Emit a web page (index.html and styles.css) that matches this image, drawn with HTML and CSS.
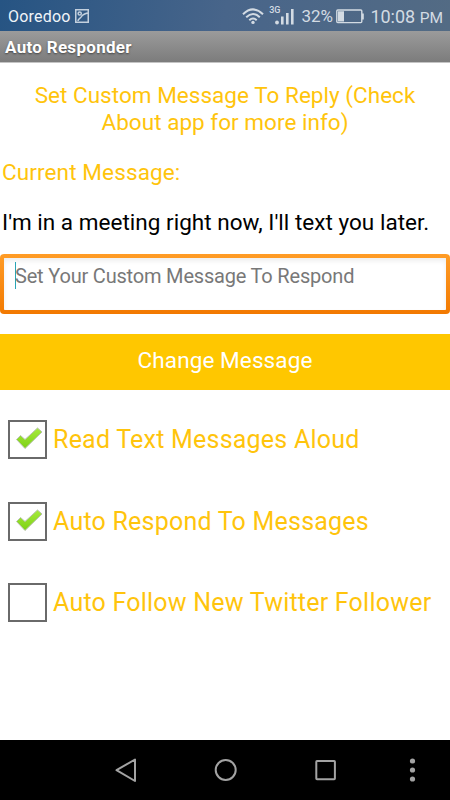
FILE: index.html
```html
<!DOCTYPE html>
<html lang="en">
<head>
<meta charset="utf-8">
<title>Auto Responder</title>
<link rel="stylesheet" href="styles.css">
</head>
<body>
<div class="screen">
  <header class="status">
    <span class="carrier">Ooredoo</span>
    <svg class="picture" width="14" height="14" viewBox="0 0 14 14" fill="none" stroke="#c3d0de" stroke-width="1.5"><path d="M.75.75h12.500v12.500H.75zM3 12c0-2.500 2.500-2.500 3.500-4.500S9 5 12.500 4"/><circle cx="4.700" cy="4.500" r="1.600"/></svg>
    <div class="indicators">
      <svg class="wifi" width="22" height="17" viewBox="0 0 22 17" fill="none" stroke="#d3dbe3" stroke-width="2"><path d="M1 6.200Q11-3.400 21 6.200M4.200 9.200Q11 2.700 17.800 9.200M7.300 12.200Q11 8.700 14.700 12.200"/><circle cx="11" cy="14.400" r="1.700" fill="#d3dbe3" stroke="none"/></svg>
      <span class="network">3G</span>
      <svg class="signal" width="19" height="17" viewBox="0 0 19 17" fill="#d3dbe3"><circle cx="2" cy="14.500" r="1.900"/><path d="M6 8.500h2.600v8H6zM11 5h2.600v11.500H11zM16 1h2.600v15.500H16z"/></svg>
      <span class="percent">32%</span>
      <svg class="battery" width="28" height="15" viewBox="0 0 28 15"><rect x=".8" y="1" width="25" height="12.600" rx="1" fill="none" stroke="#d3dbe3" stroke-width="1.400"/><path d="M2 2.200h6v10.200H2zM26 4.500h1.800v6H26z" fill="#d3dbe3"/></svg>
      <span class="clock">10:08 <small>PM</small></span>
    </div>
  </header>
  <h1 class="title">Auto Responder</h1>
  <main>
    <p class="heading">Set Custom Message To Reply (Check<br>About app for more info)</p>
    <p class="current">Current Message:</p>
    <p class="message">I'm in a meeting right now, I'll text you later.</p>
    <div class="field"><div class="field-inner"><span class="caret"></span><span class="hint">Set Your Custom Message To Respond</span></div></div>
    <div class="button">Change Message</div>
    <div class="options">
      <div class="option"><span class="box"><svg width="28" height="24" viewBox="0 0 28 24"><use href="#tick"/></svg></span><span>Read Text Messages Aloud</span></div>
      <div class="option"><span class="box"><svg width="28" height="24" viewBox="0 0 28 24"><use href="#tick"/></svg></span><span>Auto Respond To Messages</span></div>
      <div class="option"><span class="box"></span><span>Auto Follow New Twitter Follower</span></div>
    </div>
  </main>
  <nav class="nav">
    <svg width="450" height="60" viewBox="0 0 450 60" fill="none" stroke="#a3a3a3" stroke-width="2"><path d="M135 19.500v21.500L116.500 30.200z" stroke-linejoin="round"/><circle cx="225.700" cy="30" r="10"/><rect x="316.300" y="21" width="18.600" height="18.200" rx=".7"/><g fill="#a3a3a3" stroke="none"><circle cx="412.500" cy="21" r="2.600"/><circle cx="412.500" cy="30" r="2.600"/><circle cx="412.500" cy="39" r="2.600"/></g></svg>
  </nav>
</div>
<svg class="defs" width="0" height="0"><defs><linearGradient id="leaf" x1="0" y1="0" x2="0" y2="1"><stop offset="0" stop-color="#a6ea3c"/><stop offset="1" stop-color="#7dd114"/></linearGradient><path id="tick" d="M1.500 12.500 5.500 8.500 10 12.500 22.500 1 27 5 10 21.500z" fill="url(#leaf)" stroke="#b9c2b0" stroke-width="1" stroke-linejoin="round"/></defs></svg>
</body>
</html>
```
FILE: styles.css
```css
* { box-sizing: border-box; }
body { margin: 0; background: #fff; font-family: Roboto, sans-serif; }
p, h1 { margin: 0; font-weight: 400; }
svg { display: block; flex: none; }
.defs { position: absolute; }
.screen { width: 450px; height: 800px; display: flex; flex-direction: column; overflow: hidden; white-space: nowrap; }
.status { height: 31px; flex: none; display: flex; align-items: center; padding: 1px 8px 0; background: linear-gradient(100deg, #265483, #48658a 50%, #536b84); color: #d3dbe3; }
.carrier { font-size: 16px; color: #f0f4f8; width: 63px; letter-spacing: .2px; }
.picture { margin-left: 4px; }
.indicators { display: flex; align-items: center; margin-left: auto; }
.network { font-size: 9px; font-weight: 500; line-height: 8px; margin: 0 -7px 13px 5px; }
.signal { margin-left: 2px; }
.percent { font-size: 17px; margin-left: 7px; width: 34px; }
.battery { margin-left: 1px; }
.clock { font-size: 18px; margin: 0 -1px 0 6px; }
.clock small { font-size: 15.500px; }
.title { height: 32px; flex: none; padding-left: 5px; font-size: 17px; font-weight: 700; line-height: 32px; letter-spacing: .3px; color: #fff; text-shadow: 0 1px 2px #444; background: linear-gradient(#9b9b9b, #7c7c7c); border-bottom: 1px solid #c4c4c4; }
main { height: 677px; flex: none; color: #ffc40c; font-size: 22.500px; line-height: 27px; }
.heading { padding-top: 19px; text-align: center; letter-spacing: .03px; }
.current { padding: 23px 0 0 2px; letter-spacing: .12px; }
.message { padding: 23px 0 0 2px; color: #000; letter-spacing: .03px; }
.field { height: 60px; margin-top: 18px; padding: 4px; border-radius: 4px; background: linear-gradient(#ff9c26, #f27900); }
.field-inner { height: 52px; background: #fff; box-shadow: inset 0 3px 5px #eee; display: flex; padding: 4px 0 0 11px; border-radius: 1px; }
.caret { width: 1px; height: 27px; background: #2aa5b5; }
.hint { color: #787878; font-size: 20px; line-height: 28px; margin-left: -1px; letter-spacing: -.19px; }
.button { height: 56px; margin-top: 20px; padding-top: 13px; background: #ffc700; color: #fff; text-align: center; letter-spacing: .1px; }
.options { padding: 30px 0 0 8px; }
.option { display: flex; align-items: center; height: 39px; margin-bottom: 42.500px; font-size: 25px; letter-spacing: .22px; gap: 6px; }
.box { width: 39px; height: 39px; flex: none; border: 2px solid #6a6a6a; padding: 5px 0 0 5px; }
.nav { height: 60px; flex: none; background: #000; }
```
